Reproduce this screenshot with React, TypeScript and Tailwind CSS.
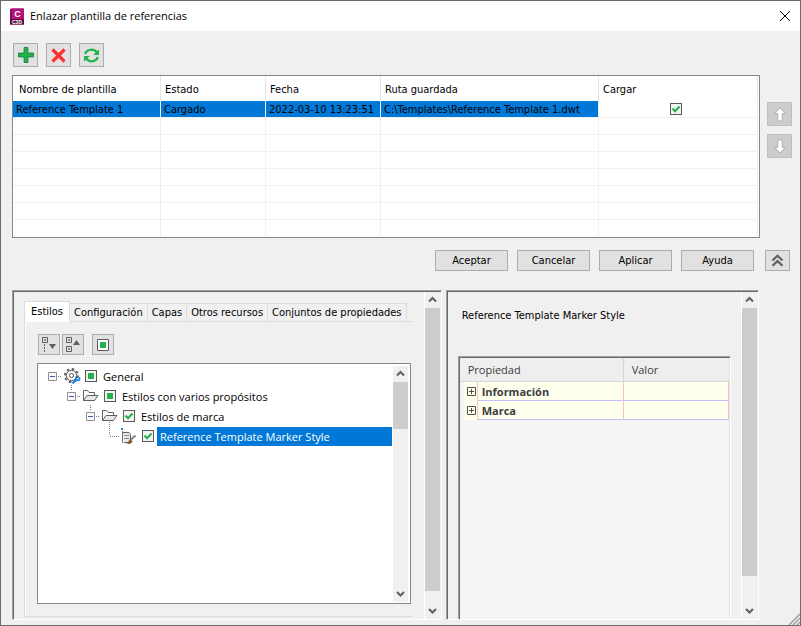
import type { ReactNode } from 'react'
import clsx from 'clsx'

const templates = [
  {
    name: 'Reference Template 1',
    status: 'Cargado',
    date: '2022-03-10 13:23:51',
    path: 'C:\\Templates\\Reference Template 1.dwt',
  },
]

const tabs = ['Configuración', 'Capas', 'Otros recursos', 'Conjuntos de propiedades']

const properties = ['Información', 'Marca']

export default function App() {
  return (
    <div className="min-h-screen flex flex-col border border-[#6b6b6b] bg-[#f0f0f0] font-['DejaVu_Sans_Condensed','DejaVu_Sans',sans-serif] text-[11px] leading-4 text-black select-none">
      <TitleBar />

      <main className="flex-1 flex flex-col pl-[11px] pt-3 pb-[5px]">
        <div className="flex gap-2 pl-px">
          <ToolButton label="Añadir plantilla" className="w-[25px] h-6">
            <svg width="16" height="16" viewBox="0 0 17 17">
              <path d="M6.5.5h4v6h6v4h-6v6h-4v-6h-6v-4h6z" fill="#22b14c" stroke="#148a3c" />
            </svg>
          </ToolButton>
          <ToolButton label="Quitar plantilla" className="w-[25px] h-6">
            <svg width="15" height="15" viewBox="0 0 15 15">
              <path d="M1.5 1.5l12 12M13.5 1.5l-12 12" stroke="#ff3030" strokeWidth="3.2" />
            </svg>
          </ToolButton>
          <ToolButton label="Actualizar" className="w-[25px] h-6">
            <svg width="17" height="15" viewBox="0 0 18 16" fill="none" stroke="#22b14c" strokeWidth="2.4">
              <path d="M2.2 6.2C4 1.2 11.5.2 14.6 4.6" />
              <path d="M15.8 9.8C14 14.8 6.5 15.8 3.4 11.4" />
              <path d="M17 1.500v6h-6z" fill="#22b14c" stroke="none" />
              <path d="M1 14.500v-6h6z" fill="#22b14c" stroke="none" />
            </svg>
          </ToolButton>
        </div>

        <div className="flex gap-[7px] mt-2 pr-2">
          <TemplateTable />
          <div className="flex flex-col gap-2 pt-[27px]">
            <MoveButton label="Subir" path="M6 .8l5.200 5.700h-3v7.500h-4.400v-7.500h-3z" />
            <MoveButton label="Bajar" path="M6 14.200l5.200-5.700h-3v-7.500h-4.400v7.500h-3z" />
          </div>
        </div>

        <div className="flex justify-end mt-3 pr-[10px]">
          <div className="flex gap-[9px] mr-[11px]">
            {['Aceptar', 'Cancelar', 'Aplicar', 'Ayuda'].map((text) => (
              <button key={text} type="button" className="w-[73px] h-[21px] pt-px border border-[#adadad] bg-[#e1e1e1]">
                {text}
              </button>
            ))}
          </div>
          <ToolButton label="Contraer" className="w-[25px] h-[21px]">
            <svg width="13" height="13" viewBox="0 0 13 13" fill="none" stroke="#606060" strokeWidth="2.2">
              <path d="M1.500 6.500l5-4.700 5 4.700M1.500 11.800l5-4.700 5 4.700" />
            </svg>
          </ToolButton>
        </div>

        <div className="flex-1 flex gap-1 mt-[19px] pr-[41px]">
          <StylesPanel />
          <PropertiesPanel />
        </div>
      </main>

      <ResizeGrip />
    </div>
  )
}

function TitleBar() {
  return (
    <header className="flex items-center h-[30px] pl-2 pr-[9px] bg-white font-['Open_Sans',sans-serif]">
      <svg width="16" height="17" viewBox="0 0 16 17">
        <path d="M1 1.500L3 .5h11l1 1v15H1z" fill="#7a0c53" />
        <path d="M3 .5h12v11H1v-10z" fill="#b5127b" />
        <path d="M1 11h14v5.500H1z" fill="#5c0a3c" />
        <path d="M1 1.500l2-1V11H1z" fill="#8a0f5e" />
        <text x="8.500" y="9" textAnchor="middle" fill="#fff" fontSize="9" fontWeight="700" fontFamily="Liberation Sans">
          C
        </text>
        <text x="8" y="15.500" textAnchor="middle" fill="#fff" fontSize="5" fontWeight="700" fontFamily="Liberation Sans">
          C3D
        </text>
      </svg>
      <h1 className="ml-[5px]">Enlazar plantilla de referencias</h1>
      <button type="button" aria-label="Cerrar" className="ml-auto pb-px">
        <svg width="12" height="12" viewBox="0 0 12 12" stroke="#000">
          <path d="M1 1l10 10M11 1L1 11" />
        </svg>
      </button>
    </header>
  )
}

function ToolButton({ label, className, children }: { label: string; className?: string; children: ReactNode }) {
  return (
    <button
      type="button"
      aria-label={label}
      className={clsx('flex items-center justify-center border border-[#adadad] bg-[#e1e1e1]', className)}
    >
      {children}
    </button>
  )
}

function MoveButton({ label, path }: { label: string; path: string }) {
  return (
    <button
      type="button"
      aria-label={label}
      disabled
      className="flex items-center justify-center w-[25px] h-6 border border-[#bfbfbf] bg-[#cccccc]"
    >
      <svg width="12" height="15" viewBox="0 0 12 15">
        <path d={path} fill="#fff" stroke="#b0b0b0" />
      </svg>
    </button>
  )
}

function Check({ label, partial }: { label: string; partial?: boolean }) {
  return (
    <span className="inline-grid size-3 shrink-0">
      <input
        type="checkbox"
        aria-label={label}
        defaultChecked
        className="col-start-1 row-start-1 appearance-none size-3 border border-[#5a5a5a] bg-[#f4f4f4]"
      />
      <svg width="12" height="12" viewBox="0 0 12 12" className="col-start-1 row-start-1 pointer-events-none">
        {partial ? (
          <path d="M3 3h6v6H3z" fill="#22b14c" />
        ) : (
          <path d="M2.500 5.500l2.500 2.700 4.500-4.700" fill="none" stroke="#22b14c" strokeWidth="2" />
        )}
      </svg>
    </span>
  )
}

function TemplateTable() {
  const cell = 'h-[17px] p-0 pl-[3px] border-r border-b border-[#f0f0f0] leading-4'

  return (
    <div className="flex-1 border border-[#828790] bg-white pr-px">
      <table className="w-full table-fixed border-separate border-spacing-0">
        <colgroup>
          <col className="w-[148px]" />
          <col className="w-[105px]" />
          <col className="w-[115px]" />
          <col className="w-[218px]" />
          <col />
        </colgroup>
        <thead>
          <tr>
            {['Nombre de plantilla', 'Estado', 'Fecha', 'Ruta guardada', 'Cargar'].map((title, i) => (
              <th
                key={title}
                className={clsx(
                  'h-[25px] p-0 pt-[2px] border-r border-[#e5e5e5] text-left font-normal',
                  i === 0 ? 'pl-[6px]' : 'pl-1',
                )}
              >
                {title}
              </th>
            ))}
          </tr>
        </thead>
        <tbody>
          {templates.map((t) => (
            <tr key={t.name}>
              {[t.name, t.status, t.date, t.path].map((value) => (
                <td key={value} className={clsx(cell, 'bg-[#0078d7] bg-clip-padding whitespace-nowrap')}>
                  <div className="h-4 leading-[18px]">{value}</div>
                </td>
              ))}
              <td className={cell}>
                <div className="flex justify-center pr-2">
                  <Check label={`Cargar ${t.name}`} />
                </div>
              </td>
            </tr>
          ))}
          {Array.from({ length: 7 }, (_, row) => (
            <tr key={row}>
              {Array.from({ length: 5 }, (_, col) => (
                <td key={col} className={clsx(cell, row === 6 && 'border-b-0')} />
              ))}
            </tr>
          ))}
        </tbody>
      </table>
    </div>
  )
}

function SunkenPanel({ className, children }: { className?: string; children: ReactNode }) {
  return (
    <section className={clsx('flex border border-t-[#a0a0a0] border-l-[#a0a0a0] border-r-white border-b-white', className)}>
      <div className="flex-1 min-w-0 flex border-t border-l border-[#696969]">{children}</div>
    </section>
  )
}

function ScrollBar({ thumb, rest, className }: { thumb: string; rest: string; className?: string }) {
  return (
    <div className={clsx('flex flex-col w-[15px] shrink-0 bg-[#f0f0f0]', className)}>
      <ScrollArrow label="Desplazar hacia arriba" path="M1 5.500l3.500-3.500L8 5.500" />
      <div className={clsx('bg-[#cdcdcd]', thumb)} />
      <div className={rest} />
      <ScrollArrow label="Desplazar hacia abajo" path="M1 2l3.500 3.500L8 2" />
    </div>
  )
}

function ScrollArrow({ label, path }: { label: string; path: string }) {
  return (
    <button type="button" aria-label={label} className="flex items-center justify-center h-4 shrink-0">
      <svg width="9" height="8" viewBox="0 0 9 8" fill="none" stroke="#606060" strokeWidth="2">
        <path d={path} />
      </svg>
    </button>
  )
}

function StylesPanel() {
  return (
    <SunkenPanel className="flex-[430]">
      <div className="flex-1 min-w-0 flex flex-col pl-[10px] pr-3 pt-[9px] pb-[2px]">
        <div role="tablist" className="flex items-end">
          <button
            type="button"
            role="tab"
            aria-selected="true"
            className="h-[21px] px-[6px] pb-px border border-b-0 border-[#dcdcdc] bg-white"
          >
            Estilos
          </button>
          {tabs.map((tab) => (
            <button
              key={tab}
              type="button"
              role="tab"
              aria-selected="false"
              className="h-[19px] px-1 pt-px border border-l-0 border-[#dcdcdc] whitespace-nowrap"
            >
              {tab}
            </button>
          ))}
          <div className="flex-1 border-b border-[#dcdcdc]" />
        </div>

        <div className="flex-1 flex flex-col border-l border-b border-[#dcdcdc]">
          <div className="flex-1 flex flex-col border-l border-white pl-[11px] pr-px pt-3 pb-3">
            <div className="flex gap-[2px] pl-px mb-2">
              <ToolButton label="Contraer todo" className="w-[22px] h-[21px]">
                <svg width="16" height="16" viewBox="0 0 16 16" fill="none" stroke="#606060">
                  <path d="M1.500.5h5v5h-5z" />
                  <path d="M3.500 2.500h1v1h-1z" strokeWidth=".8" />
                  <path d="M3.500 7v9" strokeDasharray="2 1" />
                  <path d="M8 7h7l-3.500 5z" fill="#606060" stroke="none" />
                </svg>
              </ToolButton>
              <ToolButton label="Expandir todo" className="w-[22px] h-[21px]">
                <svg width="16" height="16" viewBox="0 0 16 16" fill="none" stroke="#606060">
                  <path d="M1.500.5h5v5h-5zM1.500 9.500h5v5h-5z" />
                  <path d="M3.500 2.500h1v1h-1zM3.500 11.500h1v1h-1z" strokeWidth=".8" />
                  <path d="M8 8h7l-3.500-5z" fill="#606060" stroke="none" />
                </svg>
              </ToolButton>
              <ToolButton label="Seleccionar todo" className="w-[22px] h-[21px] ml-[6px]">
                <svg width="12" height="12" viewBox="0 0 12 12">
                  <path d="M.5.5h11v11H.5z" fill="#fff" stroke="#5a5a5a" />
                  <path d="M3 3h6v6H3z" fill="#22b14c" />
                </svg>
              </ToolButton>
            </div>
            <StyleTree />
          </div>
        </div>
      </div>
      <ScrollBar className="border-l border-white box-content mr-px" thumb="flex-[281]" rest="flex-[12]" />
    </SunkenPanel>
  )
}

function StyleTree() {
  return (
    <div className="flex-1 flex border border-[#828790] bg-white">
      <ul role="tree" className="flex-1 min-w-0 pt-[2px] pl-px font-['Open_Sans',sans-serif]">
        <TreeRow indent="pl-[9px]" label="General" icon={<GearIcon />} partial first />
        <TreeRow indent="pl-[28px]" label="Estilos con varios propósitos" icon={<FolderIcon />} partial />
        <TreeRow indent="pl-[47px]" label="Estilos de marca" icon={<FolderIcon />} />
        <TreeRow indent="pl-[66px]" label="Reference Template Marker Style" icon={<MarkerIcon />} leaf />
      </ul>
      <ScrollBar className="mt-[2px] mb-px mr-[2px] ml-px" thumb="flex-[47]" rest="flex-[155]" />
    </div>
  )
}

type TreeRowProps = {
  indent: string
  label: string
  icon: ReactNode
  partial?: boolean
  first?: boolean
  leaf?: boolean
}

function TreeRow({ indent, label, icon, partial, first, leaf }: TreeRowProps) {
  return (
    <li role="treeitem" className={clsx('flex items-center h-5', indent)}>
      <svg width="16" height="20" viewBox="0 0 16 20" fill="none" className="shrink-0 overflow-visible">
        <g stroke="#808080" strokeDasharray="1 1">
          {!first && <path d={leaf ? 'M4.500-4v14' : 'M4.500-1v6'} />}
          <path d={leaf ? 'M5 10.500h9' : 'M10 10.500h4'} />
        </g>
        {!leaf && (
          <>
            <path d="M.5 6.500h8v8h-8z" fill="#fafafa" stroke="#919191" />
            <path d="M2 10.500h5" stroke="#3b5cb0" />
          </>
        )}
      </svg>
      <span className="w-4 shrink-0">{icon}</span>
      <span className="ml-[5px] mr-[2px] flex">
        <Check label={label} partial={partial} />
      </span>
      {leaf ? (
        <span className="flex-1 h-[19px] ml-px pl-[3px] leading-[20px] bg-[#0078d7] text-white">{label}</span>
      ) : (
        <span className="pt-px pl-1">{label}</span>
      )}
    </li>
  )
}

function GearIcon() {
  return (
    <svg width="17" height="17" viewBox="0 0 17 17" fill="none">
      <circle cx="7.500" cy="7.500" r="6.600" stroke="#5a5a5a" strokeWidth="1.800" strokeDasharray="2.600 2.584" />
      <circle cx="7.500" cy="7.500" r="5.200" fill="#f2f2f2" stroke="#5a5a5a" />
      <circle cx="7.500" cy="7.500" r="2" fill="#fff" stroke="#5a5a5a" />
      <path d="M8.500 15.500l4.500-4.500" stroke="#1e88e5" strokeWidth="2.400" />
      <path d="M12 8.500v3.500h4M15.500 9v2.500l-2 1.500" stroke="#1e88e5" strokeWidth="1.500" />
    </svg>
  )
}

function FolderIcon() {
  return (
    <svg width="16" height="14" viewBox="0 0 16 14" stroke="#606060" strokeLinejoin="round">
      <path d="M.5 11.500v-10h4l1.500 2h5.500v3" fill="#fff" />
      <path d="M.5 11.500L4 6.500h11l-3.500 5z" fill="#e8e8e8" />
    </svg>
  )
}

function MarkerIcon() {
  return (
    <svg width="17" height="17" viewBox="0 0 17 17" fill="none">
      <path d="M0 0h2v2H0z" fill="#1e88e5" />
      <path d="M1.500 3v12" stroke="#707070" />
      <path d="M2 4.500h6l1.500 2v6L8 14.500H3" fill="#e8e8e8" stroke="#606060" />
      <path d="M3 7.500h5M3 10.500h5" stroke="#909090" />
      <path d="M10 11.500l4.500-4" stroke="#808080" strokeWidth="1.800" />
      <path d="M5.500 15.500c2-.5 1.500-3 3.500-4l2.500 1.500c-.5 2.500-3 3.500-6 2.500z" fill="#8b5a2b" />
    </svg>
  )
}

function PropertiesPanel() {
  return (
    <SunkenPanel className="flex-[313]">
      <div className="flex-1 min-w-0 flex flex-col pl-[10px] pr-[10px] pt-4">
        <h2 className="pl-1 mb-8">Reference Template Marker Style</h2>
        <SunkenPanel className="flex-1 border-b-0">
          <div className="flex-1 bg-[#f5f5f5] border-r border-[#e3e3e3] font-['Open_Sans',sans-serif] text-[#3c3c3c]">
            <table className="w-full table-fixed border-separate border-spacing-0">
              <colgroup>
                <col className="w-[18px]" />
                <col className="w-[146px]" />
                <col />
              </colgroup>
              <thead>
                <tr className="bg-[#eeeeee]">
                  <th colSpan={2} className="h-6 p-0 pl-2 border-r border-b border-[#d8d8d8] text-left font-normal">
                    Propiedad
                  </th>
                  <th className="h-6 p-0 pl-2 border-b border-[#d8d8d8] text-left font-normal">Valor</th>
                </tr>
              </thead>
              <tbody>
                {properties.map((name) => (
                  <tr key={name} className="bg-[#ffffee]">
                    <td className="h-[19px] p-0 pl-[7px] border-r border-r-[#ffc0c0] border-l-4 border-l-[#f5f5f5]">
                      <button type="button" aria-label={`Expandir ${name}`} className="block -ml-1">
                        <svg width="9" height="9" viewBox="0 0 9 9" fill="none" stroke="#505050">
                          <path d="M.5.5h8v8h-8zM2 4.500h5M4.500 2v5" />
                        </svg>
                      </button>
                    </td>
                    <td className="h-[19px] p-0 pt-px pl-1 border-r border-b border-r-[#ffc0c0] border-b-[#c0c0ff] font-bold">
                      {name}
                    </td>
                    <td className="h-[19px] p-0 border-r border-b border-r-[#ffc0c0] border-b-[#c0c0ff]" />
                  </tr>
                ))}
              </tbody>
            </table>
          </div>
        </SunkenPanel>
      </div>
      <ScrollBar className="border-l border-white box-content mr-px" thumb="flex-[265]" rest="flex-[27]" />
    </SunkenPanel>
  )
}

function ResizeGrip() {
  return (
    <svg width="12" height="12" viewBox="0 0 12 12" className="fixed right-px bottom-px" stroke="#a0a0a0" strokeWidth="1.5">
      <path d="M1 12L12 1M5 12l7-7M9 12l3-3" />
    </svg>
  )
}
